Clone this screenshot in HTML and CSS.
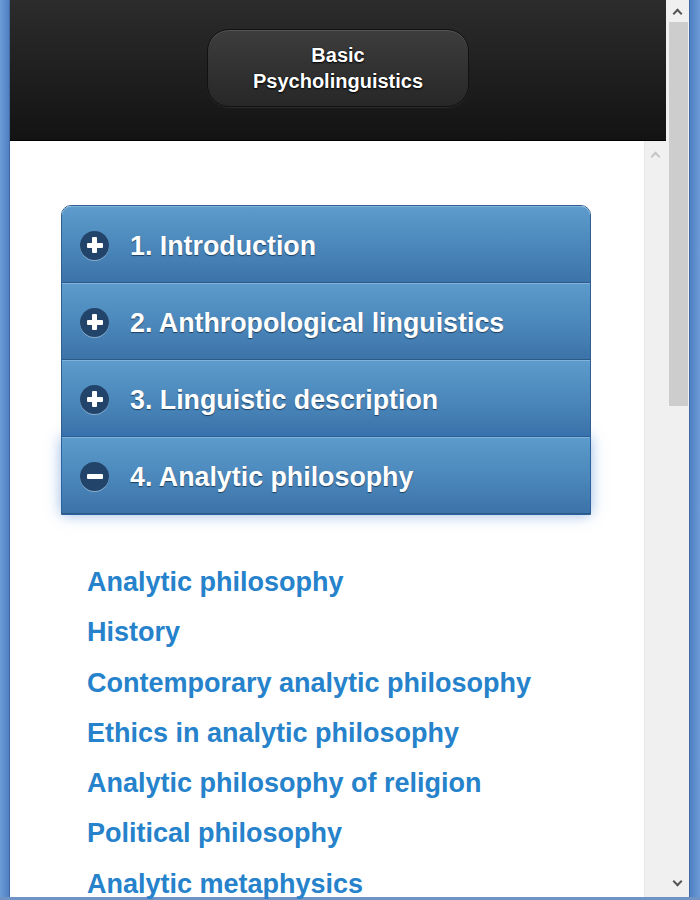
FILE: index.html
```html
<!DOCTYPE html>
<html>
<head>
<meta charset="utf-8">
<link rel="stylesheet" href="styles.css">
</head>
<body>
<div class="window">
  <div class="frame-left"></div>
  <div class="main">
    <header class="header">
      <div class="title-btn">Basic<br>Psycholinguistics</div>
    </header>
    <div class="body-row">
      <div class="content">
        <div class="accordion">
          <div class="acc-row"><span class="icon plus"></span><span class="acc-label">1. Introduction</span></div>
          <div class="acc-row"><span class="icon plus"></span><span class="acc-label">2. Anthropological linguistics</span></div>
          <div class="acc-row"><span class="icon plus"></span><span class="acc-label">3. Linguistic description</span></div>
          <div class="acc-row active"><span class="icon minus"></span><span class="acc-label">4. Analytic philosophy</span></div>
        </div>
        <ul class="links">
          <li><a href="#">Analytic philosophy</a></li>
          <li><a href="#">History</a></li>
          <li><a href="#">Contemporary analytic philosophy</a></li>
          <li><a href="#">Ethics in analytic philosophy</a></li>
          <li><a href="#">Analytic philosophy of religion</a></li>
          <li><a href="#">Political philosophy</a></li>
          <li><a href="#">Analytic metaphysics</a></li>
        </ul>
      </div>
      <div class="inner-scroll"><span class="chev up light"></span></div>
    </div>
  </div>
  <div class="outer-scroll">
    <span class="chev up"></span>
    <div class="thumb"></div>
    <div class="track"></div>
    <span class="chev down"></span>
  </div>
  <div class="frame-right"></div>
</div>
</body>
</html>
```

FILE: styles.css
```css
* { box-sizing: border-box; }
html, body { margin: 0; padding: 0; height: 900px; overflow: hidden; background: #fff; }
body { font-family: "Liberation Sans", Arial, sans-serif; }

.window {
  display: flex;
  height: 900px;
  border-bottom: 3px solid #6f93c4;
}
.frame-left {
  width: 10px;
  background: linear-gradient(to right, #6d9bd8, #4f80c2);
  border-right: 1px solid #3e6aa6;
}
.frame-right {
  width: 11px;
  background: linear-gradient(to right, #4f80c2, #6d9bd8);
  border-left: 1px solid #3e6aa6;
}
.main {
  flex: 1;
  display: flex;
  flex-direction: column;
  min-width: 0;
}
.header {
  height: 141px;
  flex: none;
  background: linear-gradient(to bottom, #2c2c2c, #131313);
  border-bottom: 1px solid #000;
  display: flex;
  justify-content: center;
  padding-top: 29px;
}
.title-btn {
  width: 262px;
  height: 78px;
  border-radius: 22px;
  border: 1px solid #111;
  background: linear-gradient(to bottom, #3d3d3d, #272727);
  box-shadow: inset 0 1px 0 rgba(255,255,255,0.12), 0 1px 0 rgba(255,255,255,0.08);
  color: #fff;
  font-weight: bold;
  font-size: 20px;
  line-height: 26px;
  text-align: center;
  padding-top: 12px;
  text-shadow: 0 1px 2px #000, 0 0 1px #000;
}
.body-row {
  flex: 1;
  display: flex;
  min-height: 0;
}
.content {
  flex: 1;
  background: #fff;
  padding: 64px 52px 0 51px;
}
.inner-scroll {
  width: 22px;
  background: #f0f0f0;
  border-left: 1px solid #e8e8e8;
  display: flex;
  justify-content: center;
  padding-top: 7px;
}
.outer-scroll {
  width: 23px;
  background: #f0f0f0;
  display: flex;
  flex-direction: column;
  align-items: center;
  padding-top: 5px;
}
.thumb {
  width: 19px;
  height: 384px;
  background: #cdcdcd;
  margin-top: 5px;
  margin-left: 1px;
}
.track { flex: 1; }
.chev {
  width: 7px;
  height: 7px;
  border-left: 2px solid #555;
  border-top: 2px solid #555;
  display: block;
  flex: none;
}
.chev.up { transform: rotate(45deg); margin-top: 5px; }
.chev.down { transform: rotate(225deg); margin-bottom: 12px; }
.chev.light { border-color: #c6c6c6; }

.accordion {
  width: 530px;
  border: 1px solid #2e5f8e;
  border-radius: 10px 10px 0 0;
}
.acc-row {
  height: 77px;
  display: flex;
  align-items: center;
  padding-left: 18px;
  padding-top: 3px;
  background: linear-gradient(to bottom, #5c9bcb, #4a86ba 55%, #3c73a8);
  border-top: 1px solid #7fb3dc;
  border-bottom: 1px solid #2b5a87;
}
.acc-row:first-child { border-radius: 9px 9px 0 0; }
.acc-row.active {
  box-shadow: 0 0 14px rgba(40,110,200,0.55);
  position: relative;
}
.icon {
  width: 29px;
  height: 29px;
  border-radius: 50%;
  background: #23446a;
  box-shadow: 0 1px 0 rgba(255,255,255,0.35);
  position: relative;
  flex: none;
  margin-top: -2px;
}
.icon::before, .icon::after {
  content: "";
  position: absolute;
  background: #fff;
  border-radius: 1px;
}
.icon::before { left: 6.5px; top: 12px; width: 16px; height: 5px; }
.plus::after { left: 12px; top: 6.5px; width: 5px; height: 16px; }
.minus::after { display: none; }
.acc-label {
  margin-left: 21px;
  color: #fff;
  font-weight: bold;
  font-size: 26.8px;
  text-shadow: 0 1px 1px #1d3f60;
  white-space: nowrap;
}
.links {
  list-style: none;
  margin: 42px 0 0;
  padding: 0 0 0 26px;
}
.links li {
  line-height: 50.3px;
  font-size: 27px;
  font-weight: bold;
}
.links a {
  color: #2582cb;
  text-decoration: none;
}
```
